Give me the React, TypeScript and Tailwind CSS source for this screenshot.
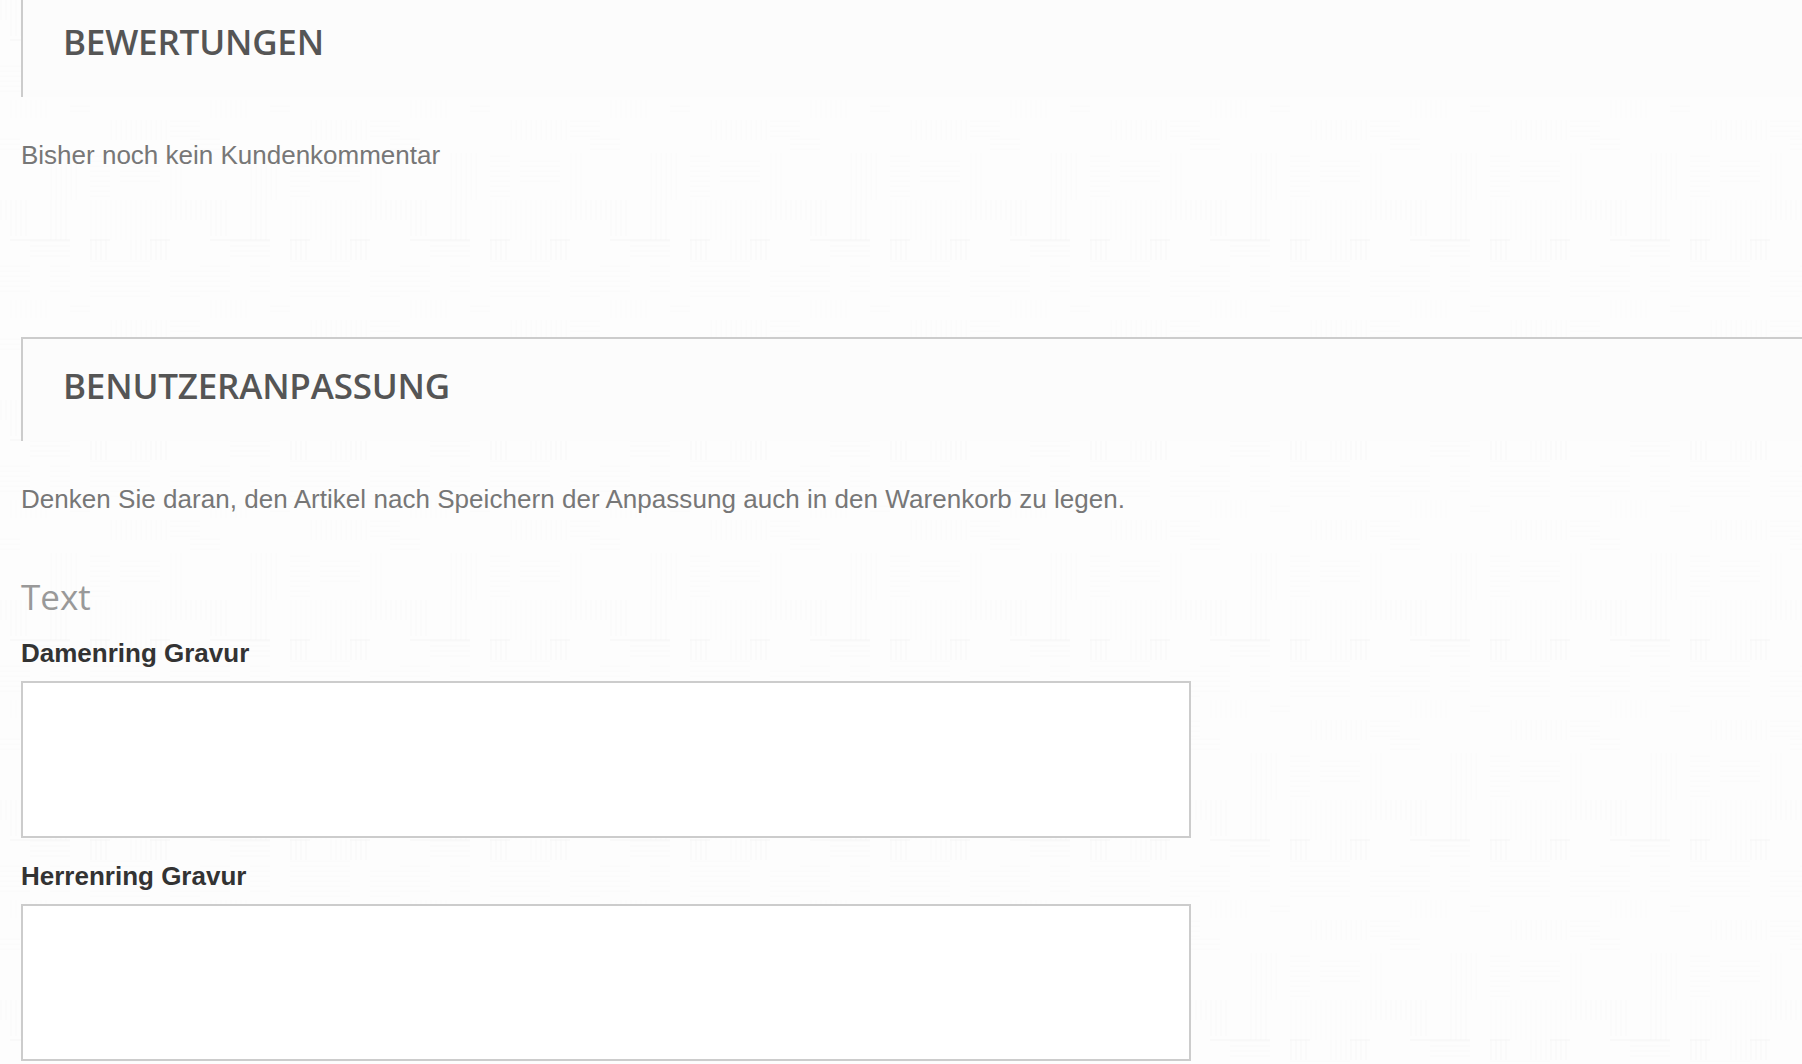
import React from 'react';

const SectionHeading = ({ title, bordered }: { title: string; bordered?: boolean }) => (
  <div className={`border-l-2 border-[#cccccc] bg-[#fcfcfc] pl-[40px] ${bordered ? 'border-t-2 h-[104px] pt-[23px]' : 'h-[97px] pt-[18px]'}`}>
    <h2 className="text-[35px] leading-[48px] font-semibold tracking-[-0.2px] text-[#555555] font-['Open_Sans',sans-serif]">{title}</h2>
  </div>
);

const Field = ({ label, className }: { label: string; className?: string }) => (
  <div className={className}>
    <label className="block text-[26px] leading-[30px] font-bold text-[#333333]">{label}</label>
    <textarea className="block mt-[13px] w-[1170px] h-[157px] bg-white border-2 border-[#cccccc] resize-none outline-none" />
  </div>
);

// [x, y, w, h, direction, colour] for each hatched block of the 200px tile
const BLOCKS: [number, number, number, number, 'v' | 'h', string][] = [
  [10, 0, 20, 36, 'v', '#f9f9f9'],
  [50, 0, 20, 40, 'v', '#f9f9f9'],
  [90, 0, 80, 40, 'v', '#fbfbfb'],
  [170, 0, 30, 20, 'v', '#f9f9f9'],
  [0, 0, 10, 20, 'v', '#f9f9f9'],
  [30, 40, 40, 20, 'h', '#f9f9f9'],
  [90, 40, 20, 20, 'v', '#f7f7f7'],
  [130, 40, 20, 20, 'v', '#f9f9f9'],
  [150, 40, 20, 20, 'v', '#f7f7f7'],
  [0, 65, 30, 30, 'h', '#fafafa'],
  [50, 65, 20, 30, 'h', '#fafafa'],
  [90, 60, 60, 40, 'h', '#fafafa'],
  [170, 70, 30, 30, 'h', '#fafafa'],
  [10, 100, 40, 18, 'v', '#fbfbfb'],
  [70, 105, 20, 10, 'h', '#fafafa'],
  [110, 120, 60, 20, 'v', '#fafafa'],
  [170, 120, 30, 20, 'h', '#fafafa'],
  [0, 138, 20, 16, 'h', '#fafafa'],
  [190, 138, 10, 16, 'h', '#fafafa'],
  [50, 153, 30, 47, 'v', '#fafafa'],
  [90, 155, 20, 45, 'h', '#fafafa'],
  [120, 160, 40, 24, 'h', '#fafafa'],
  [170, 153, 12, 47, 'v', '#fbfbfb'],
];

const hatch = ([x, y, w, h, dir]: (typeof BLOCKS)[number]) => {
  let d = '';
  if (dir === 'v') {
    for (let i = 1; i < w; i += 5) d += `M${x + i} ${y}v${h}`;
  } else {
    for (let i = 1; i < h; i += 5) d += `M${x} ${y + i}h${w}`;
  }
  return d;
};

// faint woven texture behind the page
const Texture = () => (
  <svg className="absolute inset-0 w-full h-full" aria-hidden="true">
    <defs>
      <pattern id="weave" width="200" height="200" patternUnits="userSpaceOnUse">
        {BLOCKS.map((b, i) => (
          <path key={i} d={hatch(b)} fill="none" stroke={b[5]} strokeWidth="1" />
        ))}
        <path d="M10 40h60M150 40h20M90 40h20" fill="none" stroke="#f5f5f5" strokeWidth="1" />
      </pattern>
    </defs>
    <rect width="100%" height="100%" fill="url(#weave)" />
  </svg>
);

const App: React.FC = () => {
  return (
    <div className="relative w-[1802px] h-[1064px] overflow-hidden bg-[#fdfdfd] font-['Liberation_Sans',Arial,sans-serif]">
      <Texture />
      <div className="relative pl-[21px]">
        <SectionHeading title="BEWERTUNGEN" />
        <p className="mt-[43px] text-[26px] leading-[30px] text-[#777777]">Bisher noch kein Kundenkommentar</p>
        <div className="mt-[167px]">
          <SectionHeading title="BENUTZERANPASSUNG" bordered />
        </div>
        <p className="mt-[43px] text-[26px] leading-[30px] tracking-[0.04px] text-[#777777]">
          Denken Sie daran, den Artikel nach Speichern der Anpassung auch in den Warenkorb zu legen.
        </p>
        <h3 className="mt-[61px] text-[35px] leading-[44px] text-[#999999] font-['Open_Sans',sans-serif]">Text</h3>
        <Field label="Damenring Gravur" className="mt-[19px]" />
        <Field label="Herrenring Gravur" className="mt-[23px]" />
      </div>
    </div>
  );
};

export default App;
